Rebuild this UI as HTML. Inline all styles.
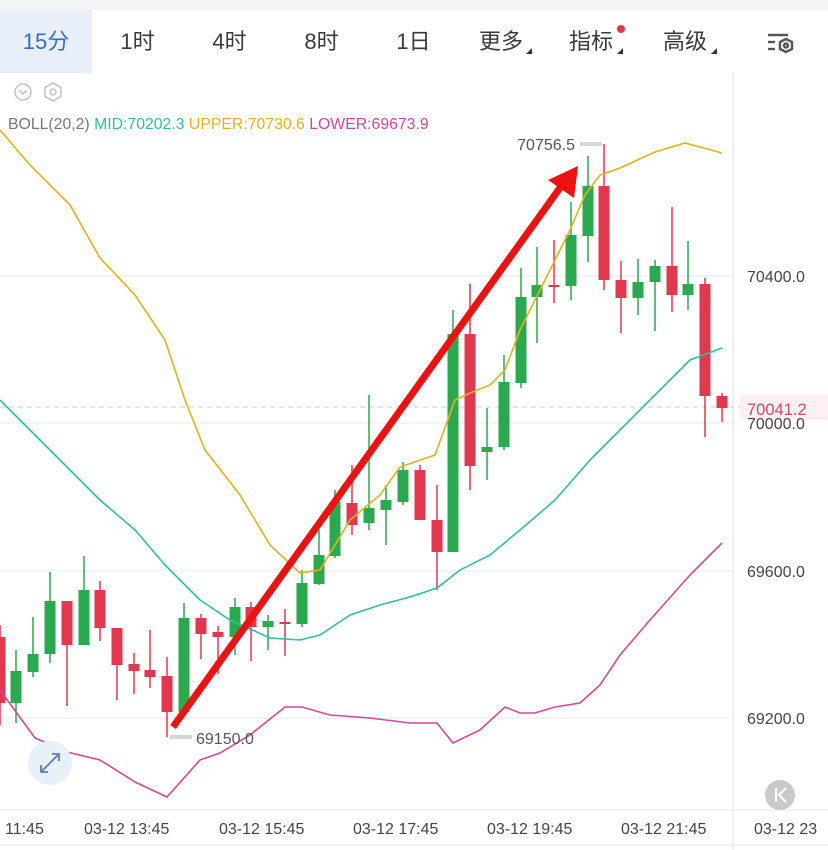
<!DOCTYPE html>
<html><head><meta charset="utf-8"><style>
body{margin:0;width:828px;height:850px;overflow:hidden;background:#fff;font-family:"Liberation Sans","Noto Sans CJK SC",sans-serif;}
#top{position:absolute;left:0;top:0;width:828px;height:10px;background:#f3f4f7}
#tabs{position:absolute;left:0;top:10px;width:828px;height:63px;background:#fff}
.t{position:absolute;top:0;height:63px;line-height:63px;font-size:22px;color:#3a3a3a;text-align:center}
.tri{position:absolute;width:0;height:0;border-left:6px solid transparent;border-bottom:6px solid #333}
</style></head><body>
<div id="top"></div>
<div id="tabs">
<div class="t" style="left:0;width:92px;background:#e9f0fb;color:#2f6fd0">15分</div>
<div class="t" style="left:100px;width:75px">1时</div>
<div class="t" style="left:192px;width:75px">4时</div>
<div class="t" style="left:284px;width:75px">8时</div>
<div class="t" style="left:376px;width:75px">1日</div>
<div class="t" style="left:466px;width:70px">更多</div><div class="tri" style="left:526px;top:38px"></div>
<div class="t" style="left:556px;width:70px">指标</div><div class="tri" style="left:617px;top:38px"></div>
<div style="position:absolute;left:617px;top:15px;width:8px;height:8px;border-radius:50%;background:#e03b3b"></div>
<div class="t" style="left:650px;width:70px">高级</div><div class="tri" style="left:711px;top:38px"></div>
<svg style="position:absolute;left:766px;top:21px" width="32" height="24" viewBox="0 0 32 24"><g stroke="#555" stroke-width="2.4" fill="none"><line x1="2" y1="4" x2="22" y2="4"/><line x1="2" y1="11" x2="9" y2="11"/><line x1="2" y1="18" x2="9" y2="18"/><polygon points="20,8 26,11 26,18 20,21 14,18 14,11"/><circle cx="20" cy="14.5" r="2"/></g></svg>
</div>
<svg id="c" style="position:absolute;left:0;top:0" width="828" height="850" viewBox="0 0 828 850"></svg>
<script>
var s='';
function L(a,b,c,d,col,w,da){s+='<line x1="'+a+'" y1="'+b+'" x2="'+c+'" y2="'+d+'" stroke="'+col+'" stroke-width="'+(w||1)+'"'+(da?' stroke-dasharray="'+da+'"':'')+'/>';}
[276,423,571,718].forEach(function(y){L(0,y,733,y,'#f0f0f0',1.5)});
L(733,73,733,850,'#ececec',1.5);
L(0,810,828,810,'#eeeeee',1.5);L(0,845,828,845,'#eeeeee',1.5);
L(0,407,740,407,'#cfcfcf',1,'5,4');
function P(pts,col){s+='<polyline fill="none" stroke="'+col+'" stroke-width="1.6" points="'+pts.map(function(p){return p.join(',')}).join(' ')+'"/>';}
var c=[[0,637,703,625,725,'r'],[16,703,671,650,723,'g'],[33,672,654,617,677,'g'],[50,654,601,572,663,'g'],[67,601,645,601,706,'r'],[84,645,590,556,645,'g'],[100,590,628,581,641,'r'],[117,628,665,628,700,'r'],[134,664,671,653,694,'r'],[150,670,677,630,688,'r'],[167,676,712,657,737,'r'],[184,712,618,603,712,'g'],[201,618,634,614,659,'r'],[218,632,637,626,674,'r'],[235,637,607,598,655,'g'],[251,607,627,602,661,'r'],[268,627,621,615,650,'g'],[285,622,624,609,656,'r'],[302,624,583,570,627,'g'],[319,584,555,530,585,'g'],[335,556,502,490,558,'g'],[352,503,525,465,535,'r'],[369,523,508,395,530,'g'],[386,510,500,485,545,'g'],[403,502,470,462,505,'g'],[420,470,520,465,520,'r'],[437,520,552,485,590,'r'],[453,552,334,310,552,'g'],[470,334,466,284,490,'r'],[487,452,447,408,480,'g'],[504,447,382,355,450,'g'],[521,383,297,268,388,'g'],[537,297,285,247,343,'g'],[554,285,286,240,303,'r'],[571,286,235,202,300,'g'],[588,236,186,156,262,'g'],[604,186,280,144,290,'r'],[621,280,298,261,333,'r'],[638,298,282,259,315,'g'],[655,282,266,260,331,'g'],[672,266,295,207,312,'r'],[688,295,284,241,310,'g'],[705,284,396,278,437,'r'],[722,396,408,393,422,'r']];
c.forEach(function(k){var col=k[5]=='g'?'#2aa94f':'#e0394f';L(k[0],k[3],k[0],k[4],col,1.5);var t=Math.min(k[1],k[2]),h=Math.max(2,Math.abs(k[1]-k[2]));s+='<rect x="'+(k[0]-5.5)+'" y="'+t+'" width="11" height="'+h+'" fill="'+col+'"/>';});
P([[0,130],[30,165],[70,205],[100,258],[135,295],[165,340],[185,400],[205,450],[240,495],[270,545],[300,573],[320,570],[350,520],[380,495],[400,467],[435,455],[455,400],[470,393],[490,385],[505,370],[520,330],[540,290],[555,260],[570,230],[585,195],[600,175],[620,168],[655,152],[685,143],[722,153]],'#e8b018');
P([[0,400],[30,430],[70,470],[100,500],[135,530],[165,565],[200,600],[230,620],[270,638],[300,640],[320,635],[350,615],[380,605],[410,597],[437,588],[460,570],[490,555],[520,530],[555,500],[590,460],[620,430],[650,400],[690,360],[722,348]],'#2fbfa0');
P([[0,690],[35,738],[67,752],[100,760],[135,782],[167,797],[200,760],[220,753],[250,735],[285,707],[302,707],[330,715],[370,718],[410,723],[437,723],[453,743],[480,730],[505,707],[520,713],[535,713],[555,707],[580,703],[600,685],[620,655],[650,620],[690,575],[722,543]],'#d2489a');
L(173,727,562,185,'#ee1111',7);
s+='<polygon points="548,180 578,166 574,198" fill="#ee1111"/>';
s+='<rect x="170" y="735" width="22" height="4" fill="#d6d6d6"/><rect x="580" y="142" width="22" height="4" fill="#d6d6d6"/>';
function T(x,y,t,col,sz,anc){s+='<text x="'+x+'" y="'+y+'" fill="'+col+'" font-size="'+sz+'" font-family="Liberation Sans, sans-serif"'+(anc?' text-anchor="'+anc+'"':'')+'>'+t+'</text>';}
T(196,744,'69150.0','#555',16);T(575,150,'70756.5','#555',16,'end');
s+='<rect x="740" y="395" width="88" height="25" fill="#fdf0f2"/>';
T(747,282,'70400.0','#444',16);T(747,429,'70000.0','#444',16);T(747,415,'70041.2','#d44a66',16.5);
T(747,577,'69600.0','#444',16);T(747,724,'69200.0','#444',16);
T(5,834,'11:45','#444',16);T(84,834,'03-12 13:45','#444',16);T(219,834,'03-12 15:45','#444',16);T(353,834,'03-12 17:45','#444',16);T(487,834,'03-12 19:45','#444',16);T(621,834,'03-12 21:45','#444',16);T(754,834,'03-12 23','#444',16);
s+='<text x="8" y="129" font-size="15.8" font-family="Liberation Sans, sans-serif"><tspan fill="#777">BOLL(20,2) </tspan><tspan fill="#2fbfa0">MID:70202.3 </tspan><tspan fill="#e8b018">UPPER:70730.6 </tspan><tspan fill="#d2489a">LOWER:69673.9</tspan></text>';
s+='<circle cx="23" cy="92" r="8" fill="none" stroke="#bbb" stroke-width="1.3"/><polyline points="19.5,90.5 23,94 26.5,90.5" fill="none" stroke="#bbb" stroke-width="1.3"/>';
s+='<polygon points="53,83 61,87.5 61,96.5 53,101 45,96.5 45,87.5" fill="none" stroke="#bbb" stroke-width="1.3"/><circle cx="53" cy="92" r="3" fill="none" stroke="#bbb" stroke-width="1.3"/>';
s+='<circle cx="50" cy="763" r="22" fill="#e8f0fa"/><g stroke="#5a80b8" stroke-width="1.8" fill="none"><line x1="41" y1="772" x2="59" y2="754"/><polyline points="52,754 59,754 59,761"/><polyline points="41,765 41,772 48,772"/></g>';
s+='<circle cx="780" cy="795" r="15" fill="#c9c9c9"/><g stroke="#fff" stroke-width="2.2" fill="none"><line x1="776" y1="788" x2="776" y2="802"/><polyline points="786,788 779,795 786,802"/></g>';
document.getElementById('c').innerHTML=s;
</script>
</body></html>
